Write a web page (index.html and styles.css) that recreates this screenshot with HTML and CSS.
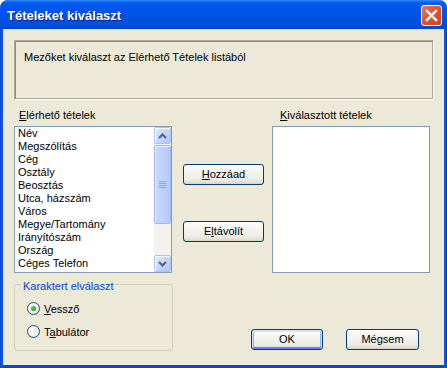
FILE: index.html
```html
<!DOCTYPE html>
<html>
<head>
<meta charset="utf-8">
<link rel="stylesheet" href="styles.css">
</head>
<body>
<div class="window">
  <div class="titlebar">
    <span class="title">Tételeket kiválaszt</span>
    <div class="close">
      <svg width="13" height="13" viewBox="0 0 13 13"><path d="M2 2 L11 11 M11 2 L2 11" stroke="#fff" stroke-width="2.4" stroke-linecap="square"/></svg>
    </div>
  </div>
  <div class="client">
    <div class="info">Mezőket kiválaszt az Elérhető Tételek listából</div>
    <div class="lists">
      <div class="col col-left">
        <div class="label"><u>E</u>lérhető tételek</div>
        <div class="listbox">
          <ul class="items">
            <li>Név</li>
            <li>Megszólítás</li>
            <li>Cég</li>
            <li>Osztály</li>
            <li>Beosztás</li>
            <li>Utca, házszám</li>
            <li>Város</li>
            <li>Megye/Tartomány</li>
            <li>Irányítószám</li>
            <li>Ország</li>
            <li>Céges Telefon</li>
          </ul>
          <div class="scrollbar">
            <div class="sb-btn"><svg width="9" height="6" viewBox="0 0 9 6"><path d="M1 5 L4.5 1.5 L8 5" fill="none" stroke="#4D6185" stroke-width="2"/></svg></div>
            <div class="sb-track">
              <div class="sb-thumb">
                <svg width="7" height="7" viewBox="0 0 7 7"><path d="M0 0.5 H7 M0 2.5 H7 M0 4.5 H7 M0 6.5 H7" stroke="#8DA6E4" stroke-width="1"/></svg>
              </div>
            </div>
            <div class="sb-btn"><svg width="9" height="6" viewBox="0 0 9 6"><path d="M1 1 L4.5 4.5 L8 1" fill="none" stroke="#4D6185" stroke-width="2"/></svg></div>
          </div>
        </div>
      </div>
      <div class="col col-mid">
        <button class="btn btn-add"><u>H</u>ozzáad</button>
        <button class="btn btn-remove">E<u>l</u>távolít</button>
      </div>
      <div class="col col-right">
        <div class="label label-right"><u>K</u>iválasztott tételek</div>
        <div class="listbox listbox-right"></div>
      </div>
    </div>
    <div class="bottom">
      <fieldset class="group">
        <legend>Karaktert elválaszt</legend>
        <div class="radio-row first"><span class="radio checked"></span><span><u>V</u>essző</span></div>
        <div class="radio-row"><span class="radio"></span><span>T<u>a</u>bulátor</span></div>
      </fieldset>
      <button class="btn btn-ok">OK</button>
      <button class="btn btn-cancel">Mégsem</button>
    </div>
  </div>
</div>
</body>
</html>
```

FILE: styles.css
```css
html, body {
  margin: 0;
  padding: 0;
  background: #ffffff;
}

body {
  font-family: "Liberation Sans", Arial, sans-serif;
  font-size: 11px;
  color: #000;
}

.window {
  width: 447px;
  height: 368px;
  box-sizing: border-box;
  display: flex;
  flex-direction: column;
  background: linear-gradient(to right, #0a3fcf 0, #1660ea 2px, #0a45d8 3px, #0a45d8 444px, #1262e8 445px, #0831b8 447px);
  border-radius: 8px 8px 0 0;
  overflow: hidden;
}

.titlebar {
  height: 29px;
  flex: none;
  display: flex;
  justify-content: space-between;
  align-items: flex-start;
  background: linear-gradient(to bottom, #3d8ff9 0, #0a62f0 2px, #0058ee 4px, #0055e8 9px, #0053e3 16px, #0050de 22px, #0049d6 27px, #0043cc 29px);
  border-radius: 8px 8px 0 0;
}

.title {
  font-family: "Liberation Sans", Arial, sans-serif;
  font-weight: bold;
  font-size: 13px;
  line-height: 16px;
  color: #fff;
  padding: 8px 0 0 7px;
  text-shadow: 1px 1px 0 #0a1e8a;
}

.close {
  width: 21px;
  height: 21px;
  box-sizing: border-box;
  margin: 5px 5px 0 0;
  border: 1px solid #fff;
  border-radius: 3px;
  background: linear-gradient(135deg, #e77658 0, #e05530 45%, #cc4520 100%);
  display: flex;
  align-items: center;
  justify-content: center;
}

.client {
  flex: none;
  height: 336px;
  box-sizing: border-box;
  margin: 0 3px;
  background: #ece9d8;
  padding: 11px 10px 14px 11px;
  display: flex;
  flex-direction: column;
}

.info {
  height: 61px;
  box-sizing: border-box;
  border: 1px solid;
  border-color: #aca899 #ffffff #ffffff #aca899;
  box-shadow: inset 1px 1px 0 #8f8c7e, inset -1px -1px 0 #aca899;
  padding: 10px 8px 0 9px;
  line-height: 13px;
}

.lists {
  display: flex;
  margin-top: 9px;
}

.col {
  display: flex;
  flex-direction: column;
}

.col-left,
.col-right {
  width: 158px;
}

.col-mid {
  width: 100px;
  padding-top: 55px;
  box-sizing: border-box;
}

.label {
  line-height: 13px;
  height: 13px;
  margin-bottom: 4px;
  padding-left: 5px;
}

.label-right {
  padding-left: 8px;
}

.listbox {
  height: 147px;
  box-sizing: border-box;
  border: 1px solid #7f9db9;
  background: #fff;
  display: flex;
}

.items {
  list-style: none;
  margin: 0;
  padding: 0 0 0 3px;
  flex: 1;
  overflow: hidden;
}

.items li {
  line-height: 13px;
  height: 13px;
  white-space: nowrap;
}

.scrollbar {
  width: 17px;
  flex: none;
  display: flex;
  flex-direction: column;
  background: #f3f2ec;
}

.sb-btn {
  height: 17px;
  box-sizing: border-box;
  border: 1px solid #b0c2ee;
  border-radius: 2px;
  background: linear-gradient(135deg, #e2ebfe 0, #c6d6fc 50%, #b3c8f6 100%);
  box-shadow: inset 1px 1px 0 #fff;
  display: flex;
  align-items: center;
  justify-content: center;
}

.sb-track {
  flex: 1;
  display: flex;
  flex-direction: column;
  padding-top: 1px;
}

.sb-thumb {
  height: 79px;
  box-sizing: border-box;
  border: 1px solid #a0b5ea;
  border-radius: 2px;
  background: linear-gradient(to right, #c8d8fd 0, #c0d2fc 50%, #b4c9f8 100%);
  box-shadow: inset 1px 1px 0 #e6eefe;
  display: flex;
  align-items: center;
  justify-content: center;
}

.btn {
  font-family: "Liberation Sans", Arial, sans-serif;
  font-size: 11px;
  color: #000;
  height: 21px;
  box-sizing: border-box;
  border: 1px solid #003c74;
  border-radius: 3px;
  background: linear-gradient(to bottom, #ffffff 0, #f5f4f0 30%, #eeede5 75%, #e3e1d6 90%, #d6d0c5 100%);
  padding: 0;
  line-height: 17px;
  text-align: center;
}

.btn-add,
.btn-remove {
  width: 81px;
  margin-left: 11px;
}

.btn-remove {
  margin-top: 36px;
}

.bottom {
  display: flex;
  align-items: flex-end;
  margin-top: 3px;
}

.group {
  width: 159px;
  box-sizing: border-box;
  margin: 0;
  border: 1px solid #d0d0bf;
  border-radius: 3px;
  padding: 0 0 12px 6px;
  min-width: 0;
}

.group legend {
  color: #0046d5;
  padding: 4px 2px 0;
  line-height: 13px;
}

.radio-row {
  display: flex;
  align-items: center;
  height: 13px;
  margin-top: 10px;
  margin-left: 6px;
}

.radio-row.first {
  margin-top: 9px;
}

.radio {
  width: 13px;
  height: 13px;
  box-sizing: border-box;
  border: 1px solid #1c5180;
  border-radius: 50%;
  background: radial-gradient(circle at 40% 40%, #ffffff 0, #f4f3ee 45%, #d9d6cb 100%);
  margin-right: 4px;
  display: flex;
  align-items: center;
  justify-content: center;
}

.radio.checked::after {
  content: "";
  width: 5px;
  height: 5px;
  border-radius: 50%;
  background: radial-gradient(circle at 40% 40%, #5fd35f 0, #21a121 70%);
}

.btn-ok {
  width: 72px;
  margin-left: 78px;
  margin-bottom: 1px;
  box-shadow: inset 0 1px 0 1px #cee7ff, inset 0 -1px 0 1px #6982ee, inset 0 0 0 2px #93b3f2;
}

.btn-cancel {
  width: 73px;
  margin-left: 23px;
  margin-bottom: 1px;
}
```
